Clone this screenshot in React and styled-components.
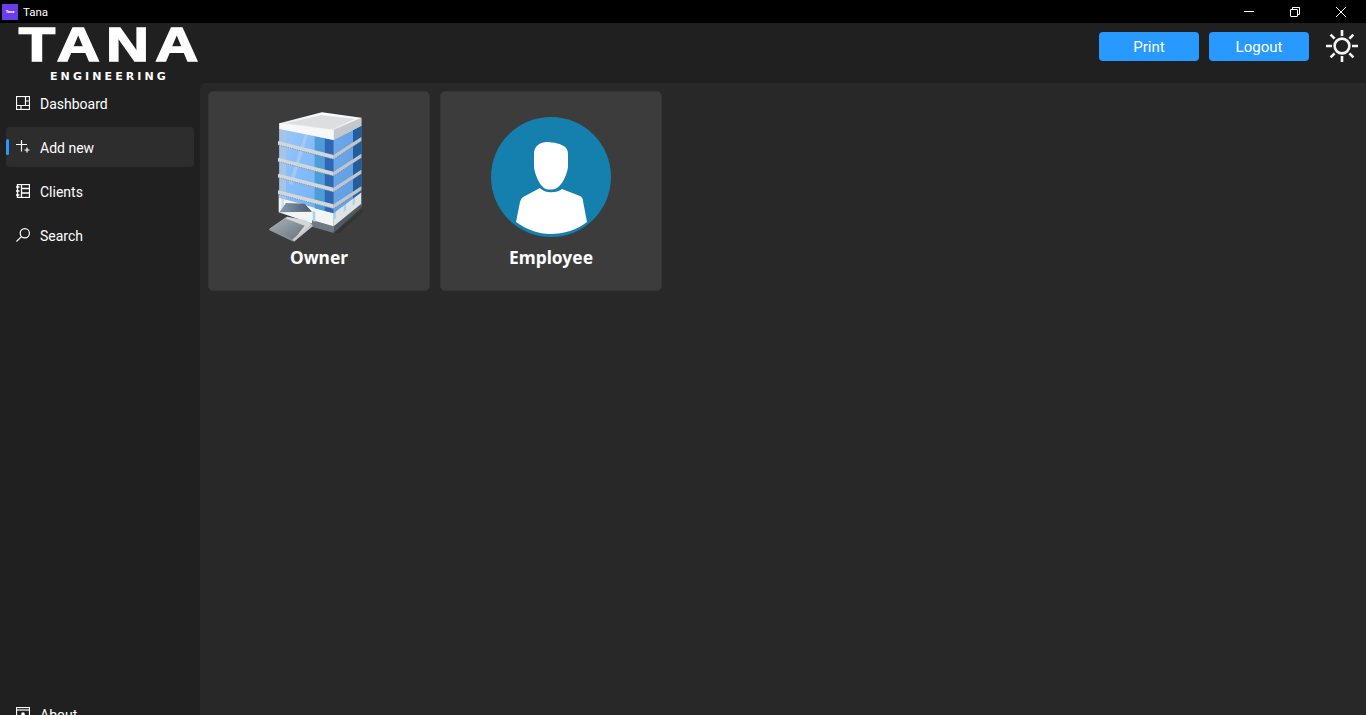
import React from "react"
import styled, { createGlobalStyle } from "styled-components"

const GlobalStyle = createGlobalStyle`
  html, body {
    margin: 0;
    height: 100%;
    overflow: hidden;
    background: #000;
  }
  * {
    box-sizing: border-box;
  }
`

const FONT = `Roboto, "Noto Sans", "Liberation Sans", sans-serif`

// window controls, drawn the way windows draws them
const MinimizeIcon = () => (
  <svg width="12" height="12" viewBox="0 0 12 12" fill="none" stroke="#fff" strokeWidth="1">
    <path d="M1 5.5h10" />
  </svg>
)

const RestoreIcon = () => (
  <svg width="12" height="12" viewBox="0 0 12 12" fill="none" stroke="#fff" strokeWidth="1">
    <rect x="1.5" y="3.5" width="7" height="7" rx="0.5" />
    <path d="M3.5 3.5V1.5h7v7H8.5" />
  </svg>
)

const CloseIcon = () => (
  <svg width="12" height="12" viewBox="0 0 12 12" fill="none" stroke="#fff" strokeWidth="1">
    <path d="M1 1l10 10M11 1L1 11" />
  </svg>
)

const SunIcon = () => (
  <svg width="34" height="34" viewBox="0 0 34 34" fill="none" stroke="#f4f4f4" strokeWidth="2.6">
    <circle cx="17" cy="17" r="7.4" />
    <path d="M17 1v6M17 27v6M1 17h6M27 17h6M5.6 5.6l4 4M24.4 24.4l4 4M28.4 5.6l-4 4M9.6 24.4l-4 4" />
  </svg>
)

const DashboardIcon = () => (
  <svg width="14" height="14" viewBox="0 0 14 14" fill="none" stroke="#fff" strokeWidth="1.2">
    <rect x="0.5" y="0.5" width="13" height="13" />
    <path d="M9.5 0.5v9M0.5 9.5h13M5 9.5v4M9.5 5h4" />
  </svg>
)

const AddIcon = () => (
  <svg width="14" height="14" viewBox="0 0 14 14" fill="none" stroke="#fff" strokeWidth="1.2">
    <path d="M0 4.5h11M5.5 -1v12.5M8.5 10h5M11 7.5v5" />
  </svg>
)

const ClientsIcon = () => (
  <svg width="14" height="14" viewBox="0 0 14 14" fill="none" stroke="#fff" strokeWidth="1.3">
    <rect x="1.5" y="0.5" width="12" height="13" />
    <path d="M5.5 0.5v13M5.5 4.5h8M5.5 9h8M0 3h3.5M0 7h3.5M0 11h3.5" />
  </svg>
)

const SearchIcon = () => (
  <svg width="14" height="14" viewBox="0 0 14 14" fill="none" stroke="#fff" strokeWidth="1.2">
    <circle cx="8.8" cy="5.2" r="4.6" />
    <path d="M5.4 8.6L0.5 13.5" />
  </svg>
)

const AboutIcon = () => (
  <svg width="14" height="14" viewBox="0 0 14 14" fill="none" stroke="#fff" strokeWidth="1.2">
    <rect x="0.5" y="0.5" width="13" height="13" />
    <path d="M0.5 3h13" />
    <circle cx="7" cy="7" r="1.8" fill="#fff" stroke="none" />
    <path d="M4 13c0-3 6-3 6 0" fill="#fff" stroke="none" />
  </svg>
)

const BuildingPicture = () => (
  <svg width="110" height="140" viewBox="6 6 330 420">
    <defs>
      <linearGradient id="glassLeft" x1="0" y1="0" x2="1" y2="1">
        <stop offset="0" stopColor="#9cc8f8" />
        <stop offset="0.4" stopColor="#86bcfa" />
        <stop offset="1" stopColor="#72aef2" />
      </linearGradient>
      <linearGradient id="glassRight" x1="0" y1="0" x2="1" y2="1">
        <stop offset="0" stopColor="#6fa9ea" />
        <stop offset="1" stopColor="#5b9ae0" />
      </linearGradient>
      <linearGradient id="rim" x1="0" y1="0" x2="0" y2="1">
        <stop offset="0" stopColor="#ffffff" />
        <stop offset="1" stopColor="#d3d6d9" />
      </linearGradient>
      <linearGradient id="ramp" x1="0" y1="0" x2="1" y2="1">
        <stop offset="0" stopColor="#aab2b9" />
        <stop offset="1" stopColor="#66727c" />
      </linearGradient>
      <linearGradient id="awning" x1="0" y1="0" x2="1" y2="0">
        <stop offset="0" stopColor="#8a9db0" />
        <stop offset="1" stopColor="#46586a" />
      </linearGradient>
    </defs>
    {/* ground shadow */}
    <polygon points="215,385 298,316 306,318 232,384" fill="#343434" />
    {/* base */}
    <polygon points="50,268 215,320 215,378 50,322" fill="#f3f4f5" />
    <polygon points="215,320 298,262 298,302 215,378" fill="#dfe3e6" />
    <polygon points="150,345 215,364 215,384 150,365" fill="#6e7a83" />
    <polygon points="215,364 298,296 298,308 215,384" fill="#4d5a64" />
    <polygon points="214,312 222,308 222,340 214,345" fill="#a8d4e6" />
    <polygon points="245,290 252,285 252,316 245,322" fill="#a8d4e6" />
    <polygon points="272,270 279,265 279,296 272,302" fill="#a8d4e6" />
    <polygon points="152,318 160,320 160,350 152,348" fill="#a8d4e6" />
    <polygon points="58,280 66,282 66,316 58,314" fill="#cfe3ee" />
    {/* glass */}
    <polygon points="52,70 215,105 215,325 52,278" fill="url(#glassLeft)" />
    <polygon points="52,70 72,74 72,284 52,278" fill="#a6c4e4" />
    <polygon points="158,93 188,99 188,318 158,310" fill="#4b9ed6" />
    <polygon points="188,99 215,105 215,325 188,318" fill="#2f67b4" />
    <polygon points="215,105 298,60 298,262 215,325" fill="url(#glassRight)" />
    <polygon points="273,73 298,60 298,262 273,280" fill="#205e9e" />
    <polygon points="128,88 138,90 92,240 80,236" fill="#b6d6f8" opacity="0.5" />
    {/* window bands */}
    <polygon points="48,108 215,150 215,163 48,120" fill="#d4d7da" />
    <polygon points="215,150 298,96 298,108 215,163" fill="#c2c6ca" />
    <polygon points="48,158 215,200 215,213 48,170" fill="#d4d7da" />
    <polygon points="215,200 298,146 298,158 215,213" fill="#c2c6ca" />
    <polygon points="48,206 215,248 215,261 48,218" fill="#d4d7da" />
    <polygon points="215,248 298,194 298,206 215,261" fill="#c2c6ca" />
    <polygon points="48,256 215,298 215,311 48,268" fill="#d4d7da" />
    <polygon points="215,298 298,244 298,256 215,311" fill="#c2c6ca" />
    <path
      d="M50 120L215 163L298 108M50 170L215 213L298 158M50 218L215 261L298 206M50 268L215 311L298 256"
      fill="none"
      stroke="#4f7fb0"
      strokeWidth="2"
      strokeDasharray="4 3"
    />
    {/* roof */}
    <polygon points="52,55 180,22 298,38 298,62 215,105 52,70" fill="url(#rim)" />
    <polygon points="72,55 178,30 278,42 210,72" fill="#dcdee0" />
    <polygon points="215,75 298,38 298,62 215,105" fill="#c4c8cc" />
    <polygon points="52,55 215,75 215,105 52,72" fill="#f7f8f9" />
    {/* entrance */}
    <polygon points="72,294 128,296 150,320 52,322" fill="url(#awning)" />
    <polygon points="75,335 130,345 150,358 95,405 22,372" fill="#d4d7da" />
    <polygon points="22,372 68,340 128,362 95,405" fill="url(#ramp)" />
    <polygon points="22,372 95,405 95,410 22,376" fill="#8d959c" />
    <polygon points="92,402 150,358 152,364 96,410" fill="#c6cace" />
  </svg>
)

const EmployeePicture = () => (
  <svg width="120" height="120" viewBox="0 0 120 120">
    <circle cx="60" cy="60" r="60" fill="#157fae" />
    <path
      d="M43 37C43 30 47 26 55 25C62 25 72 27 75 31C77 33 77 36 77 40L77 50C76 58 71 68 66 71C62 73 56 73 53 71C48 67 44 58 43 50Z"
      fill="#fff"
    />
    <path
      d="M49 71c4 5 16 6 22 1l18 7c2 1 3 3 3 5l4 21c-10 8-23 12-37 12c-11 0-23-4-34-12l4-20c1-3 2-5 5-6z"
      fill="#fff"
    />
  </svg>
)

const navItems = [
  { label: "Dashboard", Icon: DashboardIcon },
  { label: "Add new", Icon: AddIcon, active: true },
  { label: "Clients", Icon: ClientsIcon },
  { label: "Search", Icon: SearchIcon },
]

const cards = [
  { label: "Owner", Picture: BuildingPicture },
  { label: "Employee", Picture: EmployeePicture },
]

const App = () => {
  return (
    <Window>
      <GlobalStyle />
      <TitleBar>
        <AppBadge>Tana</AppBadge>
        <TitleText>Tana</TitleText>
        <WindowControls>
          <WindowButton><MinimizeIcon /></WindowButton>
          <WindowButton><RestoreIcon /></WindowButton>
          <WindowButton><CloseIcon /></WindowButton>
        </WindowControls>
      </TitleBar>
      <Header>
        <Logo>
          <LogoName>TANA</LogoName>
          <LogoSub>ENGINEERING</LogoSub>
        </Logo>
        <HeaderActions>
          <ActionButton>Print</ActionButton>
          <ActionButton>Logout</ActionButton>
          <ThemeButton><SunIcon /></ThemeButton>
        </HeaderActions>
      </Header>
      <Body>
        <Sidebar>
          {navItems.map(({ label, Icon, active }) => (
            <NavItem key={label} $active={active}>
              <Icon />
              <span>{label}</span>
            </NavItem>
          ))}
          <BottomNav>
            <NavItem>
              <AboutIcon />
              <span>About</span>
            </NavItem>
          </BottomNav>
        </Sidebar>
        <Content>
          {cards.map(({ label, Picture }) => (
            <Card key={label}>
              <PictureSlot><Picture /></PictureSlot>
              <CardLabel>{label}</CardLabel>
            </Card>
          ))}
        </Content>
      </Body>
    </Window>
  )
}

const Window = styled.div`
  display: flex;
  flex-direction: column;
  width: 1366px;
  height: 715px;
  overflow: hidden;
  background-color: #202020;
  color: #fff;
  font-family: ${FONT};
`

const TitleBar = styled.div`
  display: flex;
  align-items: center;
  flex: none;
  height: 23px;
  padding-left: 2px;
  background-color: #000;
`

const AppBadge = styled.div`
  display: flex;
  align-items: center;
  justify-content: center;
  width: 16px;
  height: 16px;
  background-color: #6a3de8;
  font-size: 4px;
  font-weight: 700;
`

const TitleText = styled.span`
  margin-left: 5px;
  font-size: 11.5px;
`

const WindowControls = styled.div`
  display: flex;
  padding-right: 2px;
  margin-left: auto;
`

const WindowButton = styled.div`
  display: flex;
  align-items: center;
  justify-content: center;
  width: 46px;
  height: 23px;
`

const Header = styled.div`
  display: flex;
  align-items: flex-start;
  justify-content: space-between;
  flex: none;
  height: 60px;
  padding: 0 7px 0 18px;
`

const Logo = styled.div`
  display: flex;
  flex-direction: column;
  align-items: center;
  width: 180px;
`

const LogoName = styled.div`
  height: 43px;
  padding-left: 5px;
  font-family: "Liberation Sans", sans-serif;
  font-size: 48px;
  font-weight: 700;
  line-height: 43px;
  letter-spacing: 5px;
  -webkit-text-stroke: 1.5px #fff;
  transform: scaleX(1.24);
`

const LogoSub = styled.div`
  margin-top: 5px;
  padding-left: 3px;
  font-family: "DejaVu Sans", sans-serif;
  font-size: 11px;
  font-weight: 700;
  line-height: 12px;
  letter-spacing: 3.1px;
`

const HeaderActions = styled.div`
  display: flex;
  align-items: flex-start;
  gap: 10px;
  padding-top: 9px;
`

const ActionButton = styled.button`
  width: 100px;
  height: 29px;
  padding: 0;
  border: none;
  border-radius: 4px;
  background-color: #2899ff;
  color: #fff;
  font-family: ${FONT};
  font-size: 15px;
`

const ThemeButton = styled.div`
  display: flex;
  margin: -3px 0 0 6px;
`

const Body = styled.div`
  display: flex;
  flex: 1;
  min-height: 0;
`

const Sidebar = styled.nav`
  display: flex;
  flex-direction: column;
  flex: none;
  gap: 4px;
  width: 200px;
  height: 651px;
  padding: 0 6px;
`

const NavItem = styled.div`
  position: relative;
  display: flex;
  align-items: center;
  gap: 10px;
  flex: none;
  height: 40px;
  padding: 2px 0 0 10px;
  border-radius: 4px;
  background-color: ${props => (props.$active ? "#2d2d2d" : "transparent")};
  font-size: 14px;

  svg {
    flex: none;
    margin-top: -2px;
  }

  &::before {
    content: "";
    display: ${props => (props.$active ? "block" : "none")};
    position: absolute;
    left: 0;
    top: 12px;
    width: 3px;
    height: 16px;
    border-radius: 2px;
    background-color: #2899ff;
  }
`

const BottomNav = styled.div`
  margin-top: auto;
`

const Content = styled.main`
  display: flex;
  align-items: flex-start;
  flex: 1;
  gap: 10px;
  padding: 8px;
  border-top-left-radius: 6px;
  background-color: #282828;
`

const Card = styled.div`
  display: flex;
  flex-direction: column;
  align-items: center;
  width: 222px;
  height: 200px;
  border: 1px solid #353535;
  border-radius: 5px;
  background-color: #3c3c3c;
`

const PictureSlot = styled.div`
  display: flex;
  align-items: center;
  justify-content: center;
  height: 150px;
  padding-top: 20px;
`

const CardLabel = styled.div`
  margin-top: 1px;
  font-family: "Noto Sans", "Liberation Sans", sans-serif;
  font-size: 17.4px;
  font-weight: 700;
  line-height: 28px;
`

export default App
